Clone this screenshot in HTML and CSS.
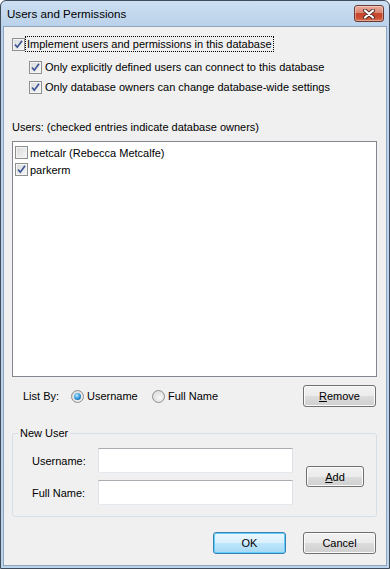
FILE: index.html
```html
<!DOCTYPE html>
<html>
<head>
  <title>Users and Permissions</title>
  <link rel="stylesheet" href="styles.css">
</head>
<body>

<div class="window">
  <div class="titlebar">
    <span class="title">Users and Permissions</span>
    <button class="close-btn" title="Close">
      <svg width="14" height="10" viewBox="0 0 14 10">
        <path d="M3 1.5 L11 8.5 M11 1.5 L3 8.5" stroke="#4b2a26" stroke-width="4" stroke-linecap="round" />
        <path d="M3 1.5 L11 8.5 M11 1.5 L3 8.5" stroke="#fff" stroke-width="2.2" stroke-linecap="round" />
      </svg>
    </button>
  </div>

  <div class="client">
    <div class="opt">
      <span class="chk"><svg width="11" height="11" viewBox="0 0 11 11"><path d="M2 5.5 L4.3 8.2 L9 1.8" /></svg></span>
      <span class="focus">Implement users and permissions in this database</span>
    </div>
    <div class="opt opt-sub first">
      <span class="chk"><svg width="11" height="11" viewBox="0 0 11 11"><path d="M2 5.5 L4.3 8.2 L9 1.8" /></svg></span>
      <span class="opt-text">Only explicitly defined users can connect to this database</span>
    </div>
    <div class="opt opt-sub">
      <span class="chk"><svg width="11" height="11" viewBox="0 0 11 11"><path d="M2 5.5 L4.3 8.2 L9 1.8" /></svg></span>
      <span class="opt-text">Only database owners can change database-wide settings</span>
    </div>

    <div class="users-label">Users: (checked entries indicate database owners)</div>
    <div class="listbox">
      <div class="item"><span class="chk"></span>metcalr (Rebecca Metcalfe)</div>
      <div class="item"><span class="chk"><svg width="11" height="11" viewBox="0 0 11 11"><path d="M2 5.5 L4.3 8.2 L9 1.8" /></svg></span>parkerm</div>
    </div>

    <div class="listby">
      <span class="listby-label">List By:</span>
      <label class="radio-opt"><span class="radio"><span class="dot"></span></span>Username</label>
      <label class="radio-opt"><span class="radio"></span>Full Name</label>
      <button class="btn btn-remove"><u>R</u>emove</button>
    </div>

    <fieldset class="group">
      <legend>New User</legend>
      <div class="group-body">
        <div class="fields">
          <div class="field"><label for="newUsername">Username:</label><input type="text" id="newUsername" /></div>
          <div class="field"><label for="newFullName">Full Name:</label><input type="text" id="newFullName" /></div>
        </div>
        <button class="btn btn-add"><u>A</u>dd</button>
      </div>
    </fieldset>

    <div class="footer">
      <button class="btn btn-ok">OK</button>
      <button class="btn">Cancel</button>
    </div>
  </div>
</div>

</body>
</html>
```

FILE: styles.css
```css
/* dialog frame */
body { margin: 0; font-family: "Liberation Sans", Arial, sans-serif; font-size: 11px; color: #000; background: #fff; }
.window { width: 390px; height: 569px; box-sizing: border-box; border: 1px solid #3f4c5c; border-radius: 6px 6px 0 0; background: linear-gradient(#cddff2, #b9d1ea 26px, #bcd3ec); display: flex; flex-direction: column; overflow: hidden; }
.titlebar { height: 25px; flex: none; display: flex; justify-content: space-between; align-items: flex-start; padding: 0 5px 0 6px; }
.title { font-size: 11.6px; line-height: 26px; }
.close-btn { margin-top: 4px; width: 30px; height: 17px; padding: 0; border: 1px solid #6b3b33; border-radius: 3px; background: linear-gradient(#e9ab9c, #d98670 45%, #c8472c 50%, #c94a2f 75%, #d77452); box-shadow: inset 0 0 0 1px rgba(255,255,255,0.35); display: flex; align-items: center; justify-content: center; }
.client { flex: 1; margin: 0 2px 2px; border: 1px solid #8fa5bf; background: #f0f0f0; padding: 9px 9px 0 8px; display: flex; flex-direction: column; }

/* checkboxes and radios */
.chk { width: 13px; height: 13px; flex: none; box-sizing: border-box; border: 1px solid #8e8f8f; background: linear-gradient(135deg, #d9dadc, #f7f7f7); box-shadow: inset 0 0 0 1px #f4f4f4; display: flex; align-items: center; justify-content: center; }
.chk svg path { fill: none; stroke: #3e5593; stroke-width: 1.7; }
.radio { width: 13px; height: 13px; flex: none; box-sizing: border-box; border: 1px solid #8e8f8f; border-radius: 50%; background: radial-gradient(circle at 60% 60%, #f7f7f7, #d4d4d4); display: flex; align-items: center; justify-content: center; margin-right: 3px; }
.radio .dot { width: 7px; height: 7px; border-radius: 50%; background: radial-gradient(circle at 40% 35%, #b9ecff, #2a8fd6 55%, #0d4f86); }

/* options */
.opt { display: flex; align-items: center; height: 16px; }
.opt .focus { margin-left: 1px; padding: 0 1px; line-height: 14px; outline: 1px dotted #000; }
.opt-sub { padding-left: 17px; margin-top: 4px; }
.opt-sub.first { margin-top: 7px; }
.opt-text { margin-left: 3px; }

/* users list */
.users-label { margin-top: 25px; line-height: 14px; }
.listbox { margin-top: 7px; height: 236px; box-sizing: border-box; border: 1px solid #828790; background: #fff; padding: 2px 2px; }
.item { display: flex; align-items: center; height: 17px; gap: 2px; }

.listby { margin-top: 8px; display: flex; align-items: center; height: 22px; padding: 0 1px 0 11px; }
.listby-label { width: 48px; }
.radio-opt { display: flex; align-items: center; width: 81px; }
.btn { font-family: inherit; font-size: 11px; color: #000; height: 22px; width: 73px; padding: 0; border: 1px solid #707070; border-radius: 3px; background: linear-gradient(#f2f2f2, #ebebeb 50%, #dddddd 50%, #cfcfcf); box-shadow: inset 0 0 0 1px #fbfbfb; }
.btn-remove { margin-left: auto; }
.btn-ok { border-color: #3c7fb1; background: linear-gradient(#eaf6fd, #d9f0fc 50%, #bee6fd 50%, #a7d9f5); box-shadow: inset 0 0 0 1px #5fd0fa; }

/* new user group */
.group { margin: 19px 0 0; padding: 0 0 11px 0; border: 1px solid #d5dfe5; border-radius: 3px; min-width: 0; }
.group legend { margin-left: 5px; padding: 0 2px; line-height: 14px; }
.group-body { display: flex; align-items: center; padding: 8px 0 0 19px; }
.fields { display: flex; flex-direction: column; gap: 7px; }
.field { display: flex; align-items: center; height: 25px; }
.field label { width: 66px; }
.field input { width: 195px; height: 25px; box-sizing: border-box; border: 1px solid; border-color: #abadb3 #dbdfe6 #e3e9ef #e2e3ea; background: #fff; font-family: inherit; font-size: 11px; }
.btn-add { width: 58px; height: 21px; margin-left: 13px; }

.footer { margin-top: 15px; display: flex; justify-content: flex-end; gap: 17px; padding-right: 1px; }
```
